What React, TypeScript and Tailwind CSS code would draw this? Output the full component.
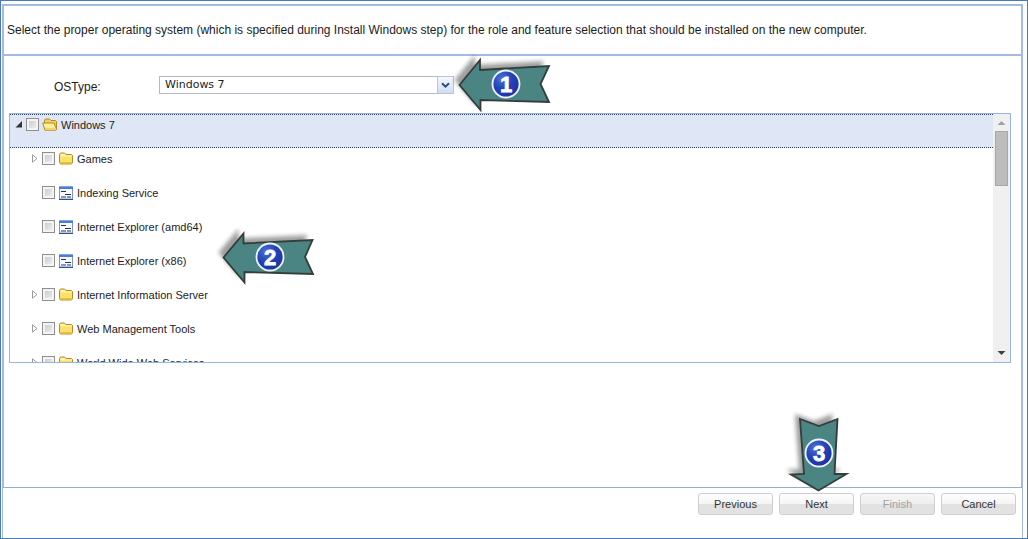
import { useState } from "react";

type NodeKind = "open" | "folder" | "feature";

type Feature = { name: string; kind: NodeKind };

const FEATURES: Feature[] = [
  { name: "Games", kind: "folder" },
  { name: "Indexing Service", kind: "feature" },
  { name: "Internet Explorer (amd64)", kind: "feature" },
  { name: "Internet Explorer (x86)", kind: "feature" },
  { name: "Internet Information Server", kind: "folder" },
  { name: "Web Management Tools", kind: "folder" },
  { name: "World Wide Web Services", kind: "folder" },
];

export default function App() {
  const [osType, setOsType] = useState("Windows 7");

  return (
    <div className="flex min-h-screen flex-col border border-[#4a7ab8] bg-white pt-[3px] pr-1 pl-px font-['Liberation_Sans',Arial,sans-serif] text-[#1c1c1c]">
      <main className="flex flex-1 flex-col border-x-2 border-t-2 border-b border-[#a3bbe3] border-b-[#8fafd6]">
        <header className="border-b-2 border-[#a3bbe3] px-[3px] py-4">
          <p className="text-[12px] leading-4">
            Select the proper operating system (which is specified during Install Windows step) for the role and
            feature selection that should be installed on the new computer.
          </p>
        </header>

        <div className="flex items-center px-[50px] pt-[19px] pb-[18px]">
          <label htmlFor="os-type" className="w-[105px] pt-1 text-[12px] leading-4">
            OSType:
          </label>
          <div className="relative w-[295px]">
            <select
              id="os-type"
              value={osType}
              onChange={(e) => setOsType(e.target.value)}
              className="block h-[18px] w-full appearance-none border border-[#b5b8c8] bg-white pl-[5px] font-['DejaVu_Sans',sans-serif] text-[11px] leading-4 outline-none"
            >
              <option>Windows 7</option>
              <option>Windows 8</option>
            </select>
            <span className="pointer-events-none absolute top-0 right-0 flex h-[18px] w-[17px] items-center justify-center border border-[#b5c3dc] bg-linear-to-b from-[#f6f9fe] to-[#cfdcf1]">
              <svg width="9" height="7" viewBox="0 0 9 7">
                <path d="M1 1.2 4.5 4.7 8 1.2" fill="none" stroke="#2c4a86" strokeWidth="2" />
              </svg>
            </span>
            <Callout
              className="absolute -top-[22px] left-full"
              width={104}
              height={62}
              points="5.5,31 26,6 26,16 95,12 86.5,30 95,48 26.5,46 26.5,56"
              cx={52}
              cy={30}
              step={1}
            />
          </div>
        </div>

        <section className="relative mr-[10px] ml-[5px] flex h-[250px] border border-[#99b5dd]">
          <ul className="min-w-0 flex-1 overflow-hidden">
            <TreeRow name="Windows 7" kind="open" />
            {FEATURES.map((f) => (
              <TreeRow key={f.name} name={f.name} kind={f.kind} />
            ))}
          </ul>
          <Scrollbar />
          <Callout
            className="absolute top-[112px] left-[204px]"
            width={104}
            height={62}
            points="9.5,31.5 29.5,7.5 29.5,17.5 98.5,14 91,31 99,48 30.5,46 30.5,56.5"
            cx={56}
            cy={31}
            step={2}
          />
        </section>
      </main>

      <footer className="flex h-[50px] items-start justify-end gap-[6px] border-x border-[#a3bbe3] px-[6px] pt-[5px]">
        <WizardButton>Previous</WizardButton>
        <div className="relative">
          <WizardButton>Next</WizardButton>
          <Callout
            className="absolute bottom-full left-[5px]"
            width={70}
            height={83}
            points="34.5,80.5 7,64.5 20,64 16,9 35,16 53.5,9 50.5,64 62.5,64"
            cx={35}
            cy={43}
            step={3}
          />
        </div>
        <WizardButton disabled>Finish</WizardButton>
        <WizardButton>Cancel</WizardButton>
      </footer>
    </div>
  );
}

function TreeRow({ name, kind }: Feature) {
  const root = kind === "open";
  return (
    <li
      className={
        root
          ? "h-[34px] border-y border-dotted border-[#33405e] bg-[#dfe7f6] pl-1"
          : "h-[34px] border-y border-transparent pl-5"
      }
    >
      <label className="flex h-[19px] items-center text-[11px] leading-4 whitespace-nowrap">
        <span className="w-3 shrink-0">
          {kind === "open" && (
            <svg width="9" height="9" viewBox="0 0 9 9">
              <path d="M8 1v6.5H1.5z" fill="#333" />
            </svg>
          )}
          {kind === "folder" && (
            <svg width="9" height="9" viewBox="0 0 9 9">
              <path d="M2.5 .8v7.4L7 4.5z" fill="#fff" stroke="#9a9a9a" />
            </svg>
          )}
        </span>
        <input
          type="checkbox"
          className="mr-[3px] h-[13px] w-[13px] shrink-0 appearance-none border border-[#8e8f8f] bg-linear-to-br from-[#c3c6ca] to-[#f4f4f4] ring-2 ring-[#f4f4f4] ring-inset checked:from-[#4a7ab8]"
        />
        <span className="mr-[3px] w-4 shrink-0">
          {kind === "open" && <OpenFolderIcon />}
          {kind === "folder" && <FolderIcon />}
          {kind === "feature" && <FeatureIcon />}
        </span>
        {name}
      </label>
    </li>
  );
}

function FolderIcon() {
  return (
    <svg width="16" height="14" viewBox="0 0 16 14">
      <path d="M1.5 10.5V2.5l1-1.5h4L8 2.5h5.5l1 1v7l-1 1.5h-11z" fill="#fbe06a" stroke="#b58a25" />
      <path d="M2.5 4.5V2.8l.7-.8H6L7.5 3.5h6v1z" fill="#fff6bd" />
      <path d="M2.5 10h11.5v1.4H3z" fill="#eebc38" />
    </svg>
  );
}

function OpenFolderIcon() {
  return (
    <svg width="16" height="14" viewBox="0 0 16 14">
      <path d="M2.5 11.5V2.5l1-1.5h4L9 2.5h4.5l1 1v8z" fill="#f4cf58" stroke="#b58a25" />
      <path d="M.7 5h11.3l2.5 6.5-.7.7H3z" fill="#fff0a0" stroke="#b58a25" />
      <path d="M3 9.8h10.3l.6 1.7H3.5z" fill="#f6d25e" />
    </svg>
  );
}

function FeatureIcon() {
  return (
    <svg width="16" height="14" viewBox="0 0 16 14">
      <path d="M1.5 1v12h13V1z" fill="#f7faff" stroke="#7796cf" />
      <path d="M1 .5h14v2.5H1z" fill="#4a7be0" />
      <path d="M1 13.5h14" stroke="#2f4f96" />
      <path d="M3 5.5h5M7 8.5h6M3 11h5M9 11h4" stroke="#273250" strokeWidth="1.2" />
    </svg>
  );
}

function Scrollbar() {
  return (
    <div className="flex w-[17px] flex-col items-center bg-[#f0f0f0]">
      <svg width="17" height="17" viewBox="0 0 17 17">
        <path d="M8.5 7 12.5 11h-8z" fill="#a0a0a0" />
      </svg>
      <div className="h-[55px] w-[13px] border border-[#a8a8a8] bg-[#bdbdbd]" />
      <svg width="17" height="17" viewBox="0 0 17 17" className="mt-auto">
        <path d="M4.5 6h8l-4 4z" fill="#404040" />
      </svg>
    </div>
  );
}

function WizardButton({ children, disabled }: { children: React.ReactNode; disabled?: boolean }) {
  return (
    <button
      type="button"
      disabled={disabled}
      className="block h-[22px] w-[75px] rounded-[3px] border border-[#cfcfcf] bg-linear-to-b from-white from-0% via-[#f4f4f4] via-50% to-[#e2e2e2] to-50% text-[11px] leading-4 text-[#333] disabled:from-[#f6f6f6] disabled:via-[#eeeeee] disabled:text-[#a0a0a0]"
    >
      {children}
    </button>
  );
}

function Callout({
  className,
  width,
  height,
  points,
  cx,
  cy,
  step,
}: {
  className: string;
  width: number;
  height: number;
  points: string;
  cx: number;
  cy: number;
  step: number;
}) {
  return (
    <svg
      width={width}
      height={height}
      viewBox={`0 0 ${width} ${height}`}
      className={`pointer-events-none overflow-visible ${className}`}
    >
      <defs>
        <radialGradient id={`ball-${step}`} cx="35%" cy="30%" r="75%">
          <stop offset="0" stopColor="#4a72d8" />
          <stop offset="0.5" stopColor="#2443b8" />
          <stop offset="1" stopColor="#1c31a0" />
        </radialGradient>
        <filter id={`soft-${step}`} x="-20%" y="-20%" width="140%" height="140%">
          <feGaussianBlur stdDeviation="2" />
        </filter>
      </defs>
      <polygon
        points={points}
        fill="#000"
        opacity="0.38"
        transform="translate(-5 -5)"
        filter={`url(#soft-${step})`}
      />
      <polygon points={points} fill="#4a8583" stroke="#333d3b" strokeWidth="1.8" />
      <circle cx={cx} cy={cy} r="13.5" fill={`url(#ball-${step})`} stroke="#eef2fb" strokeWidth="1.8" />
      <text
        x={cx}
        y={cy + 8}
        textAnchor="middle"
        fill="#fff"
        stroke="#fff"
        strokeWidth="0.8"
        className="font-['Liberation_Sans',Arial,sans-serif] text-[22px] font-bold"
      >
        {step}
      </text>
    </svg>
  );
}
